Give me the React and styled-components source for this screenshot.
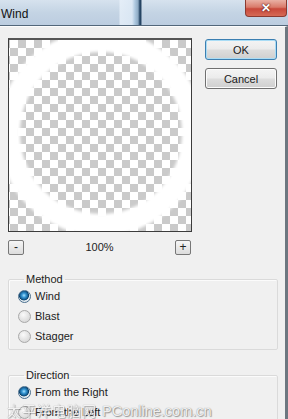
import React from 'react';
import styled, { createGlobalStyle } from 'styled-components';

const Global = createGlobalStyle`
  html, body { margin: 0; padding: 0; background: #f0f0f0; }
  body { font-family: "Liberation Sans", Arial, sans-serif; color: #222; }
`;

const Window = styled.div`
  width: 288px;
  height: 419px;
  overflow: hidden;
  background: #f0f0f0;
  position: relative;
  display: flex;
  flex-direction: column;
`;

const TitleBar = styled.div`
  height: 25px;
  flex: none;
  display: flex;
  align-items: flex-start;
  justify-content: space-between;
  border-bottom: 1px solid #52677a;
  background:
    linear-gradient(90deg, transparent 0, transparent 119px, rgba(232,241,250,.8) 120px, rgba(222,234,246,.85) 132px, rgba(170,198,222,.9) 135px, #8fabc4 138px, #1f3f5e 140px, #2c4a68 141px, transparent 142px),
    linear-gradient(180deg, #d6e2ee 0%, #c4d4e4 50%, #bccde0 100%);
`;

const Title = styled.div`
  font-size: 12px;
  line-height: 16px;
  padding: 6px 0 0 1px;
  color: #111;
`;

const Close = styled.div`
  width: 42px;
  height: 17px;
  margin-right: 1px;
  box-sizing: border-box;
  border: 1px solid #8b3a30;
  border-top: none;
  border-radius: 0 0 4px 4px;
  background: linear-gradient(180deg, #e9b0a4 0%, #d97a6a 45%, #c8483a 55%, #d66a55 100%);
  display: flex;
  align-items: center;
  justify-content: center;
  color: #fff;
  font-size: 12px;
  font-weight: bold;
  text-shadow: 0 0 2px #5a1a12, 0 0 1px #5a1a12;
`;

const Body = styled.div`
  flex: 1;
  border-top: 1px solid #fdfdfd;
  border-right: 3px solid #6d7780;
  padding: 11px 0 0 8px;
  display: flex;
  flex-direction: column;
`;

const Top = styled.div`
  display: flex;
  align-items: flex-start;
`;

const LeftCol = styled.div`
  width: 184px;
  display: flex;
  flex-direction: column;
`;

const RightCol = styled.div`
  margin-left: 13px;
  padding-top: 1px;
  display: flex;
  flex-direction: column;
  gap: 8px;
`;

const Button = styled.div`
  width: 72px;
  height: 21px;
  box-sizing: border-box;
  border: 1px solid ${p => (p.$default ? '#3c7fb1' : '#707070')};
  border-radius: 3px;
  background: linear-gradient(180deg, #f4f4f4 0%, #ebebeb 48%, #dddddd 52%, #cfcfcf 100%);
  box-shadow: inset 0 0 0 1px ${p => (p.$default ? '#a9dcf5' : '#fbfbfb')};
  display: flex;
  align-items: center;
  justify-content: center;
  font-size: 11px;
  color: #1a1a1a;
`;

const Preview = styled.div`
  position: relative;
  width: 184px;
  height: 194px;
  box-sizing: border-box;
  border: 1px solid #3c3c3c;
  border-top: 2px solid #555;
  background-color: #fff;
  background-image: conic-gradient(#cacaca 25%, #fff 0 50%, #cacaca 0 75%, #fff 0);
  background-size: 16px 16px;
  background-position: 1px 0;
  overflow: hidden;
`;

const Ring = styled.svg`
  position: absolute;
  inset: 0;
`;

const ZoomRow = styled.div`
  margin-top: 7px;
  height: 16px;
  display: flex;
  align-items: center;
  justify-content: space-between;
  padding-right: 1px;
  font-size: 11px;
`;

const ZoomButton = styled.div`
  width: 16px;
  height: 15px;
  box-sizing: border-box;
  border: 1px solid #777;
  border-radius: 2px;
  background: linear-gradient(180deg, #f6f6f6, #dcdcdc);
  display: flex;
  align-items: center;
  justify-content: center;
  font-size: 12px;
  line-height: 1;
  color: #222;
`;

const Group = styled.fieldset`
  width: 270px;
  box-sizing: border-box;
  margin: ${p => p.$top}px 0 0 0;
  padding: 0 0 3px 9px;
  min-width: 0;
  border: 1px solid #dadada;
  border-radius: 2px;
  box-shadow: inset 1px 1px 0 #fbfbfb;
`;

const Legend = styled.legend`
  padding: 0 2px;
  margin-left: 6px;
  font-size: 11px;
  line-height: 13px;
  color: #222;
`;

const Row = styled.div`
  height: 20px;
  display: flex;
  align-items: center;
  gap: 4px;
  font-size: 11px;
  color: #222;
`;

const Radio = styled.span`
  width: 13px;
  height: 13px;
  box-sizing: border-box;
  border-radius: 50%;
  border: 1px solid ${p => (p.$on ? '#4a6f8e' : '#a9a9a9')};
  background: ${p =>
    p.$on
      ? 'radial-gradient(circle at 45% 40%, #a8e2ff 0, #3a9ad6 22%, #135e94 45%, #0c3f66 52%, #dfe8ee 60%, #f4f7f9 100%)'
      : 'radial-gradient(circle at 40% 35%, #fafafa 0, #e6e6e6 45%, #cfcfcf 100%)'};
  flex: none;
`;

const Watermark = styled.div`
  position: absolute;
  left: 7px;
  top: 400px;
  display: flex;
  align-items: baseline;
  gap: 5px;
  color: rgba(255, 255, 255, 0.9);
  text-shadow: 0 0 1px #777, 1px 1px 1px rgba(0, 0, 0, 0.35);
  pointer-events: none;
`;

const WmCn = styled.span`
  font-family: "Noto Sans CJK SC", sans-serif;
  font-size: 14px;
  letter-spacing: 1px;
  opacity: 0.8;
`;

const WmEn = styled.span`
  font-family: "Liberation Sans", Arial, sans-serif;
  font-size: 14.5px;
`;

const RadioRow = ({ on, children }) => (
  <Row>
    <Radio $on={on} />
    <span>{children}</span>
  </Row>
);

export default function App() {
  return (
    <>
      <Global />
      <Window>
        <TitleBar>
          <Title>Wind</Title>
          <Close>✕</Close>
        </TitleBar>
        <Body>
          <Top>
            <LeftCol>
              <Preview>
                <Ring width="182" height="192" viewBox="0 0 182 192">
                  <defs>
                    <filter id="soft" x="-10%" y="-10%" width="120%" height="120%">
                      <feGaussianBlur stdDeviation="1.6" />
                    </filter>
                  </defs>
                  <circle cx="92" cy="93" r="92" fill="none" stroke="#fff" strokeWidth="22" filter="url(#soft)" />
                </Ring>
              </Preview>
              <ZoomRow>
                <ZoomButton>-</ZoomButton>
                <span>100%</span>
                <ZoomButton>+</ZoomButton>
              </ZoomRow>
            </LeftCol>
            <RightCol>
              <Button $default>OK</Button>
              <Button>Cancel</Button>
            </RightCol>
          </Top>
          <Group $top={18}>
            <Legend>Method</Legend>
            <RadioRow on>Wind</RadioRow>
            <RadioRow>Blast</RadioRow>
            <RadioRow>Stagger</RadioRow>
          </Group>
          <Group $top={19}>
            <Legend>Direction</Legend>
            <RadioRow on>From the Right</RadioRow>
            <RadioRow>From the Left</RadioRow>
          </Group>
        </Body>
        <Watermark>
          <WmCn>太平洋电脑网</WmCn>
          <WmEn>PConline.com.cn</WmEn>
        </Watermark>
      </Window>
    </>
  );
}
